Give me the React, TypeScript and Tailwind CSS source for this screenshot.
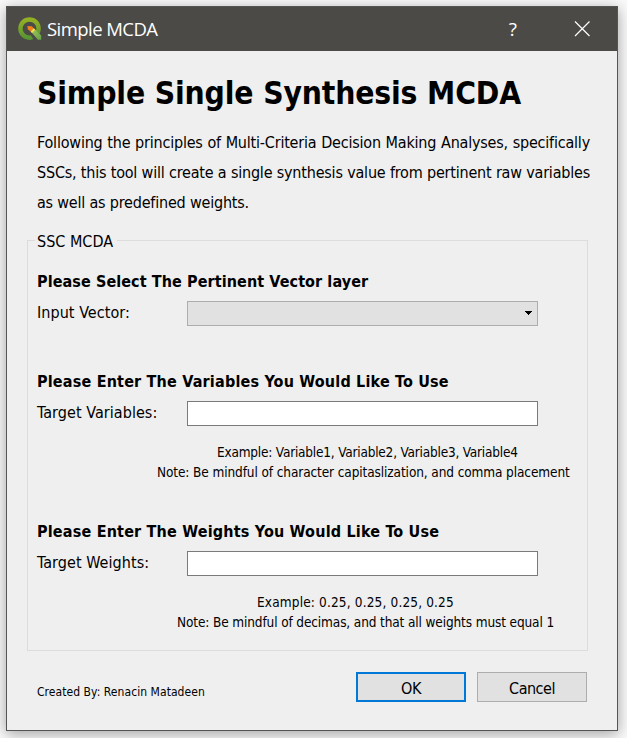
import type { ReactNode } from 'react';

function AppIcon() {
  return (
    <svg width="24" height="24" viewBox="0 0 24 24" className="mr-[5px] shrink-0">
      <defs>
        <linearGradient id="ring" x1="0" y1="0" x2="0" y2="1">
          <stop offset="0" stopColor="#93b023" />
          <stop offset="1" stopColor="#589632" />
        </linearGradient>
        <linearGradient id="tail" x1="0" y1="0" x2="1" y2="1">
          <stop offset="0" stopColor="#a5c860" />
          <stop offset="1" stopColor="#62a044" />
        </linearGradient>
      </defs>
      <circle cx="11.5" cy="11.6" r="9.1" fill="none" stroke="url(#ring)" strokeWidth="4.4" />
      <path d="M17 13 L24 19 V24 H16.5 L12.2 17.2 Z" fill="#4b4a47" />
      <path d="M13.2 15 L16.4 11.8 L23.2 18.4 V22.8 H20 Z" fill="url(#tail)" />
      <path d="M9.4 8.9 L13.8 9.2 L16 11.4 L12.6 14.6 L9.8 12.2 Z" fill="#f0801c" />
      <path d="M12.6 14.4 L15.8 11.3 L17.2 12.7 L14 15.9 Z" fill="#f3df4e" />
    </svg>
  );
}

function Heading({ children, spacing }: { children: ReactNode; spacing: string }) {
  return (
    <h2 className={`h-5 whitespace-nowrap text-[16px] font-bold leading-[22px] ${spacing}`}>
      {children}
    </h2>
  );
}

function Field({ label, children }: { label: string; children: ReactNode }) {
  return (
    <div className="mt-[10px] flex h-[26px]">
      <label className="w-[150px] shrink-0 whitespace-nowrap text-[16px] leading-[24px] tracking-[0.06px]">{label}</label>
      {children}
    </div>
  );
}

export default function App() {
  return (
    <div className="h-[738px] w-[627px] overflow-hidden bg-[#fafafa] pl-[6px] pt-[6px] font-['DejaVu_Sans_Condensed','DejaVu_Sans',sans-serif] text-black">
      <div className="flex h-[725px] w-[612px] flex-col border border-[#555653] bg-[#efefef] shadow-[0_3px_14px_rgba(0,0,0,0.36)]">
        <header className="flex h-11 shrink-0 items-center bg-[#4b4a47] pl-[11px] text-white">
          <AppIcon />
          <span className="grow font-['Open_Sans',sans-serif] text-[18.5px] leading-6 tracking-[-0.55px]">
            Simple MCDA
          </span>
          <span className="mr-[57px] font-['Open_Sans',sans-serif] text-[19px] leading-6">?</span>
          <svg width="16" height="16" viewBox="0 0 16 16" className="mr-[27px]">
            <path d="M1 0.5 L15.5 15 M15.5 0.5 L1 15" stroke="#fff" strokeWidth="1.2" />
          </svg>
        </header>

        <main className="px-5">
          <h1 className="ml-[10px] mt-[22px] h-10 whitespace-nowrap text-[31.5px] font-bold leading-10 tracking-[-0.14px]">
            Simple Single Synthesis MCDA
          </h1>
          <p className="ml-[10px] mt-[15px] w-[553px] text-justify text-[16px] leading-[30px] tracking-[-0.2px]">
            Following the principles of Multi-Criteria Decision Making Analyses, specifically SSCs, this tool will
            create a single synthesis value from pertinent raw variables as well as predefined weights.
          </p>

          <fieldset className="mt-[12px] h-[421px] w-[561px] border border-[#dcdcdc] pl-[9px]">
            <legend className="-ml-[2px] h-5 pl-[2px] pr-[4px] text-[16px] leading-[23px]">SSC MCDA</legend>

            <section className="mt-[21px] h-[100px]">
              <Heading spacing="tracking-[0.09px]">Please Select The Pertinent Vector layer</Heading>
              <Field label="Input Vector:">
                <div className="flex h-[25px] w-[351px] items-center justify-end border border-[#adadad] bg-[#e1e1e1] pr-[5px]">
                  <svg width="7" height="4" viewBox="0 0 7 4" shapeRendering="crispEdges" className="-mt-px">
                    <path d="M0 0h7v1H6v1H5v1H4v1H3V3H2V2H1V1H0z" />
                  </svg>
                </div>
              </Field>
            </section>

            <section className="h-[150px]">
              <Heading spacing="tracking-[0.19px]">Please Enter The Variables You Would Like To Use</Heading>
              <Field label="Target Variables:">
                <input className="h-[25px] w-[351px] border border-[#7a7a7a] bg-white" />
              </Field>
              <div className="ml-[119px] mt-[15px] w-[415px] whitespace-nowrap text-[13.5px] leading-5">
                <p className="ml-[61px] tracking-[-0.2px]">Example: Variable1, Variable2, Variable3, Variable4</p>
                <p className="ml-px tracking-[-0.1px]">
                  Note: Be mindful of character capitaslization, and comma placement
                </p>
              </div>
            </section>

            <section>
              <Heading spacing="tracking-[0.19px]">Please Enter The Weights You Would Like To Use</Heading>
              <Field label="Target Weights:">
                <input className="h-[25px] w-[351px] border border-[#7a7a7a] bg-white" />
              </Field>
              <div className="ml-[140px] mt-[15px] whitespace-nowrap text-[13.5px] leading-5">
                <p className="ml-[80px] tracking-[0.16px]">Example: 0.25, 0.25, 0.25, 0.25</p>
                <p className="tracking-[-0.12px]">Note: Be mindful of decimas, and that all weights must equal 1</p>
              </div>
            </section>
          </fieldset>

          <footer className="ml-[10px] mt-[21px] flex h-[30px]">
            <span className="w-[319px] whitespace-nowrap text-[12px] leading-[40px] tracking-[0.06px]">
              Created By: Renacin Matadeen
            </span>
            <button className="h-[30px] w-[110px] border-2 border-[#0078d7] bg-[#e1e1e1] pt-[3px] text-[16px] leading-none tracking-[-0.5px]">
              OK
            </button>
            <button className="ml-[11px] h-[30px] w-[110px] border border-[#adadad] bg-[#e1e1e1] pt-[3px] text-[16px] leading-none tracking-[-0.5px]">
              Cancel
            </button>
          </footer>
        </main>
      </div>
    </div>
  );
}
